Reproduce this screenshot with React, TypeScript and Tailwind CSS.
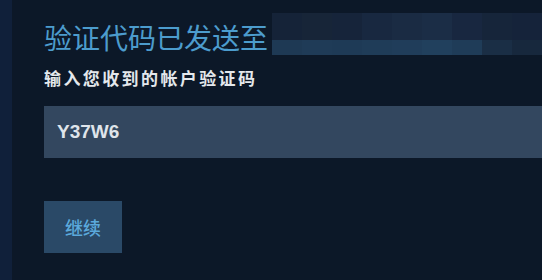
const TOP_TILES = ['#152338', '#172538', '#16243a', '#182840', '#1a2b43', '#1b2d46', '#182740', '#16253a', '#15233a'];
const BOTTOM_TILES = ['#1e3954', '#1f3b57', '#1e3a56', '#1f3c58', '#203d5a', '#21405d', '#1f3c58', '#1a2e45', '#17283d'];

export default function App() {
  return (
    <div
      className="flex w-[542px] h-[280px] overflow-hidden bg-[#0c1828]"
      style={{ fontFamily: '"Noto Sans CJK SC", "Liberation Sans", sans-serif' }}
    >
      {/* left edge strip */}
      <div className="w-[12px] shrink-0 bg-[#10203a]" />

      <div className="flex-1 flex flex-col pl-[32px]">
        {/* title + censored email */}
        <div className="flex items-end mt-[13px] h-[42px]">
          <h1 className="text-[28px] leading-none font-normal text-[#4c9ccd] whitespace-nowrap mb-[4px]">
            验证代码已发送至
          </h1>
          <div className="flex-1 flex flex-col h-[42px] ml-[4px]">
            <div className="flex h-[27px]">
              {TOP_TILES.map((c, i) => (
                <div key={i} className="flex-1" style={{ backgroundColor: c }} />
              ))}
            </div>
            <div className="flex h-[15px]">
              {BOTTOM_TILES.map((c, i) => (
                <div key={i} className="flex-1" style={{ backgroundColor: c }} />
              ))}
            </div>
          </div>
        </div>

        <p className="mt-[14px] text-[17px] leading-none font-bold tracking-[2.4px] text-[#e4e8ec] whitespace-nowrap">
          输入您收到的帐户验证码
        </p>

        <div className="mt-[20px] h-[52px] bg-[#33475f] flex items-center pl-[13px]">
          <span
            className="text-[19px] font-bold text-[#dfe4ea]"
            style={{ fontFamily: '"Liberation Sans", Arial, sans-serif' }}
          >
            Y37W6
          </span>
        </div>

        <button className="mt-[43px] w-[78px] h-[52px] bg-[#2a4967] text-[#5ba9dc] text-[18px] font-medium flex items-center justify-center">
          继续
        </button>
      </div>
    </div>
  );
}
